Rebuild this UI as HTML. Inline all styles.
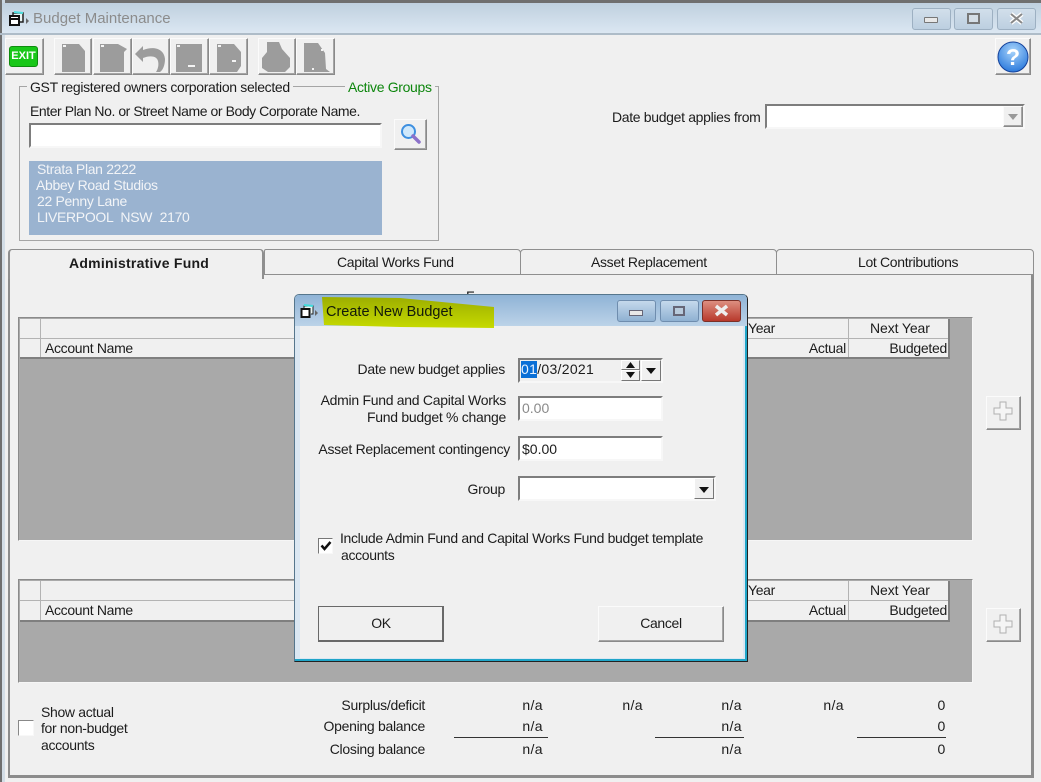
<!DOCTYPE html>
<html><head><meta charset="utf-8"><style>
html,body{margin:0;padding:0;background:#f0f0f0}
#r{position:relative;width:1041px;height:782px;overflow:hidden;background:#f0f0f0;font-family:"Liberation Sans",sans-serif;font-size:14px;color:#1c1c1c}
#r div{position:absolute;box-sizing:border-box}
.t{white-space:nowrap;line-height:16px;letter-spacing:-.33px}
.tr{white-space:nowrap;line-height:16px;text-align:right;letter-spacing:-.29px}
#r .n{letter-spacing:.4px;margin-left:-1px}
.b{background:#f0f0f0;border:1px solid;border-color:#fbfbfb #8a8a8a #8a8a8a #fbfbfb;box-shadow:inset -1px -1px 0 #a5a5a5}
.in{background:#fff;border:2px solid;border-color:#7d7d7d #f7f7f7 #f7f7f7 #7d7d7d}
.l{background:#b3b3b3}
svg{position:absolute;overflow:visible}
</style></head><body><div id="r">
<!-- main window frame -->
<div style="left:0;top:0;width:1041px;height:3px;background:#6f6f6f"></div>
<div style="left:0;top:0;width:5px;height:782px;background:#c9d6e1;border-left:2px solid #6f6f6f"></div>
<div style="left:2px;top:3px;width:1039px;height:30px;background:linear-gradient(#bfd0df,#dbe7f2)"></div>
<div style="left:0;top:33px;width:1041px;height:2px;background:#aebcc8"></div>
<div style="left:2px;top:35px;width:3px;height:747px;background:#d3dde6"></div>
<svg style="left:8px;top:10px" width="20" height="18"><path d="M5 5V3h10v9h-3" fill="#e8f4f4" stroke="#222" stroke-width="1.500"/><rect x="2" y="6" width="9" height="9" fill="#fff" stroke="#111" stroke-width="2"/><path d="M2 9h9" stroke="#111" stroke-width="2"/><path d="M6 2l9 1" stroke="#4de0e0" stroke-width="2"/><path d="M18 8l3 3-3 3z" fill="#666"/></svg>
<div class="t" style="left:33px;top:11px;color:#8c8c8c;font-size:15px;letter-spacing:0">Budget Maintenance</div>
<!-- window controls -->
<div style="left:912px;top:8px;width:39px;height:22px;border:1px solid #9db0c2;border-radius:3px;background:linear-gradient(#d2dfeb,#bccfe0)"></div>
<div style="left:924px;top:17px;width:14px;height:6px;background:#e8e8e8;border:1px solid #777;border-radius:1px"></div>
<div style="left:954px;top:8px;width:39px;height:22px;border:1px solid #9db0c2;border-radius:3px;background:linear-gradient(#d2dfeb,#bccfe0)"></div>
<div style="left:967px;top:13px;width:13px;height:11px;border:2px solid #777;background:#d5dee6"></div>
<div style="left:997px;top:8px;width:39px;height:22px;border:1px solid #9db0c2;border-radius:3px;background:linear-gradient(#d2dfeb,#bccfe0)"></div>
<svg style="left:1009px;top:13px" width="15" height="11"><path d="M2 1l11 9M13 1L2 10" stroke="#fff" stroke-width="4.500"/><path d="M2 1l11 9M13 1L2 10" stroke="#888" stroke-width="2"/></svg>
<!-- toolbar -->
<div class="b" style="left:5px;top:38px;width:39px;height:37px"></div>
<div style="left:9px;top:46px;width:29px;height:21px;border-radius:3px;background:#18c718;border:1px solid #0e8c0e;color:#fff;font-weight:bold;font-size:11px;line-height:19px;text-align:center">EXIT</div>
<div class="b" style="left:54px;top:38px;width:38px;height:37px"></div>
<div class="b" style="left:93px;top:38px;width:39px;height:37px"></div>
<div class="b" style="left:132px;top:38px;width:38px;height:37px"></div>
<div class="b" style="left:170px;top:38px;width:39px;height:37px"></div>
<div class="b" style="left:209px;top:38px;width:39px;height:37px"></div>
<div class="b" style="left:258px;top:38px;width:38px;height:37px"></div>
<div class="b" style="left:296px;top:38px;width:39px;height:37px"></div>
<svg style="left:0;top:0" width="340" height="80" fill="#9c9c9c">
<path d="M62 44h17l6 7v21H62z"/><path d="M100 44h18l9 5-3 3v20h-24z"/>
<path d="M135 54l8-8v4c10-4 21-2 22 9 0 6-2 11-5 13h-4c2-3 3-7 2-11-1-5-8-6-15-3v4z"/><path d="M176 44h26v28h-26z"/><path d="M217 44h17l7 8v14l-4 6h-20z"/>
<path d="M267 42h12l3 7 8 9v9l-5 5h-17l-6-4v-10l5-6z"/><path d="M304 43h14l7 10 1 16 4 3h-26z"/></svg>
<svg style="left:0;top:0" width="340" height="80" fill="#f4f4f4"><rect x="188" y="65" width="7" height="2"/><rect x="232" y="60" width="4" height="2"/><rect x="63" y="45" width="3" height="2"/><rect x="101" y="45" width="3" height="2"/><rect x="177" y="45" width="3" height="2"/><rect x="218" y="45" width="3" height="2"/><rect x="321" y="49" width="2" height="2"/><rect x="312" y="68" width="2" height="2"/></svg>
<div class="b" style="left:995px;top:38px;width:36px;height:37px"></div>
<svg style="left:997px;top:41px" width="32" height="32"><defs><radialGradient id="h" cx=".5" cy=".3" r=".8"><stop offset="0" stop-color="#a8d4fb"/><stop offset="1" stop-color="#1b6ed8"/></radialGradient></defs><circle cx="16" cy="16" r="15" fill="url(#h)" stroke="#14419a"/><text x="16" y="24" text-anchor="middle" font-family="Liberation Sans" font-weight="bold" font-size="23" fill="#fff">?</text></svg>
<!-- group box -->
<div style="left:19px;top:86px;width:420px;height:155px;border:1px solid #a5a5a5"></div>
<div class="t" style="left:27px;top:79px;background:#f0f0f0;padding:0 3px">GST registered owners corporation selected</div>
<div class="t" style="left:345px;top:79px;background:#f0f0f0;padding:0 3px;color:#0d860d">Active Groups</div>
<div class="t" style="left:30px;top:103px;letter-spacing:-.44px">Enter Plan No. or Street Name or Body Corporate Name.</div>
<div class="in" style="left:29px;top:123px;width:353px;height:25px"></div>
<div class="b" style="left:394px;top:119px;width:33px;height:31px"></div>
<svg style="left:400px;top:123px" width="22" height="22"><circle cx="8.5" cy="8.5" r="6.5" fill="#cfe8fb" stroke="#3d8fe0" stroke-width="2"/><path d="M13 13l6 6" stroke="#8b71c9" stroke-width="3.5" stroke-linecap="round"/></svg>
<div style="left:29px;top:161px;width:353px;height:74px;background:#9ab3d0"></div>
<div class="t" style="left:37px;top:161px;color:#f2f4f7">Strata Plan 2222</div>
<div class="t" style="left:36px;top:177px;color:#f2f4f7">Abbey Road Studios</div>
<div class="t" style="left:37px;top:193px;color:#f2f4f7">22 Penny Lane</div>
<div class="t" style="left:37px;top:209px;color:#f2f4f7;word-spacing:4px">LIVERPOOL NSW 2170</div>
<!-- date combo -->
<div class="t" style="left:612px;top:109px">Date budget applies from</div>
<div class="in" style="left:765px;top:104px;width:260px;height:25px"></div>
<div class="b" style="left:1003px;top:106px;width:20px;height:21px"></div>
<svg style="left:1008px;top:114px" width="10" height="6"><path d="M0 0h10L5 6z" fill="#999"/></svg>
<!-- tabs -->
<div style="left:8px;top:274px;width:1026px;height:504px;border:1px solid;border-color:#fff #8c8c8c #8c8c8c #8c8c8c;border-width:1px 3px 3px 2px;background:#f0f0f0"></div>
<div style="left:264px;top:249px;width:257px;height:26px;border:1px solid #8f8f8f;border-radius:2px 4px 0 0;background:#f0f0f0"></div>
<div style="left:520px;top:249px;width:257px;height:26px;border:1px solid #8f8f8f;border-radius:4px 4px 0 0;background:#f0f0f0"></div>
<div style="left:776px;top:249px;width:258px;height:26px;border:1px solid #8f8f8f;border-radius:4px 4px 0 0;background:#f0f0f0"></div>
<div style="left:8px;top:249px;width:256px;height:30px;border:solid #8f8f8f;border-width:1px 2px 0 2px;border-radius:4px 4px 0 0;background:#f0f0f0"></div>
<div class="t" style="left:69px;top:255px;font-weight:bold;letter-spacing:.25px">Administrative Fund</div>
<div class="t" style="left:337px;top:254px">Capital Works Fund</div>
<div class="t" style="left:591px;top:254px">Asset Replacement</div>
<div class="t" style="left:858px;top:254px">Lot Contributions</div>
<!-- grid 1 -->
<div style="left:18px;top:317px;width:955px;height:224px;background:#a9a9a9;border:1px solid;border-color:#8a8a8a #f6f6f6 #f6f6f6 #8a8a8a"></div>
<div style="left:20px;top:319px;width:930px;height:40px;background:#f0f0f0;border-right:2px solid #7f7f7f;border-bottom:2px solid #7f7f7f"></div>
<div class="l" style="left:20px;top:338px;width:928px;height:1px"></div>
<div class="l" style="left:40px;top:319px;width:1px;height:38px"></div>
<div class="l" style="left:848px;top:319px;width:1px;height:38px"></div>
<div class="t" style="left:45px;top:340px">Account Name</div>
<div class="t" style="left:748px;top:320px">Year</div>
<div class="tr" style="left:780px;top:340px;width:66px">Actual</div>
<div class="t" style="left:870px;top:320px;letter-spacing:-.1px">Next Year</div>
<div class="tr" style="left:860px;top:340px;width:87px">Budgeted</div>
<!-- grid 2 -->
<div style="left:18px;top:579px;width:955px;height:104px;background:#a9a9a9;border:1px solid;border-color:#8a8a8a #f6f6f6 #f6f6f6 #8a8a8a"></div>
<div style="left:20px;top:581px;width:930px;height:41px;background:#f0f0f0;border-right:2px solid #7f7f7f;border-bottom:2px solid #7f7f7f"></div>
<div class="l" style="left:20px;top:600px;width:928px;height:1px"></div>
<div class="l" style="left:40px;top:581px;width:1px;height:39px"></div>
<div class="l" style="left:848px;top:581px;width:1px;height:39px"></div>
<div class="t" style="left:45px;top:602px">Account Name</div>
<div class="t" style="left:748px;top:582px">Year</div>
<div class="tr" style="left:780px;top:602px;width:66px">Actual</div>
<div class="t" style="left:870px;top:582px;letter-spacing:-.1px">Next Year</div>
<div class="tr" style="left:860px;top:602px;width:87px">Budgeted</div>
<!-- plus buttons -->
<div class="b" style="left:986px;top:396px;width:35px;height:34px"></div>
<div class="b" style="left:986px;top:608px;width:35px;height:34px"></div>
<svg style="left:993px;top:401px" width="20" height="20"><path d="M7 1h6v6h6v6h-6v6H7v-6H1V7h6z" fill="#f5f5f5" stroke="#b0b0b0"/></svg>
<svg style="left:993px;top:614px" width="20" height="20"><path d="M7 1h6v6h6v6h-6v6H7v-6H1V7h6z" fill="#f5f5f5" stroke="#b0b0b0"/></svg>
<!-- bottom -->
<div style="left:18px;top:720px;width:16px;height:16px;background:#fff;border:1px solid;border-color:#888 #f8f8f8 #f8f8f8 #888"></div>
<div class="t" style="left:41px;top:704px">Show actual</div>
<div class="t" style="left:41px;top:720px">for non-budget</div>
<div class="t" style="left:41px;top:737px">accounts</div>
<div class="tr" style="left:300px;top:697px;width:125px">Surplus/deficit</div>
<div class="tr" style="left:300px;top:718px;width:125px">Opening balance</div>
<div class="tr" style="left:300px;top:741px;width:125px">Closing balance</div>
<div class="tr n" style="left:500px;top:697px;width:44px">n/a</div><div class="tr n" style="left:500px;top:718px;width:44px">n/a</div><div class="tr n" style="left:500px;top:741px;width:44px">n/a</div>
<div class="tr n" style="left:600px;top:697px;width:44px">n/a</div>
<div class="tr n" style="left:699px;top:697px;width:44px">n/a</div><div class="tr n" style="left:699px;top:718px;width:44px">n/a</div><div class="tr n" style="left:699px;top:741px;width:44px">n/a</div>
<div class="tr n" style="left:801px;top:697px;width:44px">n/a</div>
<div class="tr" style="left:900px;top:697px;width:45px">0</div><div class="tr" style="left:900px;top:718px;width:45px">0</div><div class="tr" style="left:900px;top:741px;width:45px">0</div>
<div style="left:454px;top:737px;width:94px;height:1px;background:#333"></div>
<div style="left:655px;top:737px;width:89px;height:1px;background:#333"></div>
<div style="left:857px;top:737px;width:89px;height:1px;background:#333"></div>
<div class="t" style="left:466px;top:288px">F</div>
<!-- dialog -->
<div style="left:294px;top:294px;width:454px;height:368px;border:1px solid #222;border-left-color:#56768c;border-top-color:#56768c;border-radius:5px 5px 0 0;background:#dbe7f2"></div>
<div style="left:745px;top:300px;width:2px;height:361px;background:#1fa5c8"></div>
<div style="left:295px;top:659px;width:452px;height:2px;background:#1fa5c8"></div>
<div style="left:295px;top:295px;width:452px;height:31px;background:linear-gradient(#8fb3d6,#bcd3e8);border-radius:4px 4px 0 0"></div>
<div style="left:300px;top:326px;width:443px;height:332px;background:#f0f0f0"></div>
<svg style="left:300px;top:296px" width="210" height="34"><defs><linearGradient id="y" x1="0" y1="0" x2="0" y2="1"><stop offset="0" stop-color="#9cae00"/><stop offset="1" stop-color="#c6da00"/></linearGradient></defs><path d="M22 1L100 2 194 11V32L100 31 24 29z" fill="url(#y)"/></svg>
<svg style="left:300px;top:304px" width="20" height="16"><path d="M4 4V2h9v8h-2" fill="#e8f4f4" stroke="#222"/><rect x="1.500" y="5" width="8" height="8" fill="#fff" stroke="#111" stroke-width="2"/><path d="M4 1l9 1" stroke="#3fdcdc" stroke-width="2"/><path d="M15 6l3 3-3 3z" fill="#666"/></svg>
<div class="t" style="left:326px;top:304px;letter-spacing:0;font-size:14.5px;color:#12190a">Create New Budget</div>
<div style="left:617px;top:300px;width:39px;height:22px;border:1px solid #6f8dae;border-radius:3px;background:linear-gradient(#c5d9ec,#8fb1d2)"></div>
<div style="left:629px;top:310px;width:14px;height:6px;background:#e8e8e8;border:1px solid #667"></div>
<div style="left:660px;top:300px;width:39px;height:22px;border:1px solid #6f8dae;border-radius:3px;background:linear-gradient(#c5d9ec,#8fb1d2)"></div>
<div style="left:673px;top:306px;width:12px;height:10px;border:2px solid #667;background:#b9cbdc"></div>
<div style="left:702px;top:300px;width:39px;height:22px;border:1px solid #7b3028;border-radius:3px;background:linear-gradient(#dd8f80,#b8392c)"></div>
<svg style="left:714px;top:305px" width="15" height="11"><path d="M2 1l11 9M13 1L2 10" stroke="#eee" stroke-width="3.500"/></svg>
<div class="tr" style="left:320px;top:361px;width:185px">Date new budget applies</div>
<div class="tr" style="left:300px;top:392px;width:206px">Admin Fund and Capital Works</div>
<div class="tr" style="left:300px;top:409px;width:206px">Fund budget % change</div>
<div class="tr" style="left:300px;top:441px;width:210px">Asset Replacement contingency</div>
<div class="tr" style="left:400px;top:481px;width:105px">Group</div>
<!-- date -->
<div style="left:518px;top:358px;width:145px;height:25px;background:#f0f0f0;border:2px solid;border-color:#7d7d7d #f7f7f7 #f7f7f7 #7d7d7d"></div>
<div style="left:521px;top:361px;width:16px;height:17px;background:#0a6fd6"></div>
<div class="t" style="left:521px;top:361px;letter-spacing:.3px"><span style="color:#e8f2ff">01</span>/03/2021</div>
<div style="left:621px;top:360px;width:19px;height:10px;background:#f0f0f0;border:1px solid;border-color:#fff #777 #777 #fff"></div>
<div style="left:621px;top:370px;width:19px;height:11px;background:#f0f0f0;border:1px solid;border-color:#fff #777 #777 #fff"></div>
<svg style="left:625px;top:362px" width="11" height="17"><path d="M1 6h9L5.500 0zM1 10h9L5.500 16z" fill="#111"/></svg>
<div style="left:641px;top:360px;width:20px;height:21px;background:#f0f0f0;border:1px solid;border-color:#fff #777 #777 #fff"></div>
<svg style="left:646px;top:368px" width="10" height="6"><path d="M0 0h10L5 6z" fill="#111"/></svg>
<div class="in" style="left:518px;top:396px;width:145px;height:25px"></div>
<div class="t" style="left:522px;top:400px;color:#8a8a8a;letter-spacing:0">0.00</div>
<div class="in" style="left:518px;top:436px;width:145px;height:25px"></div>
<div class="t" style="left:522px;top:441px;letter-spacing:0">$0.00</div>
<div class="in" style="left:518px;top:476px;width:198px;height:25px"></div>
<div style="left:694px;top:478px;width:20px;height:21px;background:#f0f0f0;border:1px solid;border-color:#fff #777 #777 #fff"></div>
<svg style="left:699px;top:487px" width="10" height="6"><path d="M0 0h10L5 6z" fill="#111"/></svg>
<!-- checkbox -->
<div style="left:318px;top:538px;width:15px;height:16px;background:#fff;border:1px solid;border-color:#777 #f8f8f8 #f8f8f8 #777"></div>
<svg style="left:320px;top:541px" width="12" height="11"><path d="M1.500 4.500l3 3.500 6-7" fill="none" stroke="#111" stroke-width="2.500"/></svg>
<div class="t" style="left:340px;top:530px">Include Admin Fund and Capital Works Fund budget template</div>
<div class="t" style="left:341px;top:547px">accounts</div>
<!-- dialog buttons -->
<div style="left:318px;top:606px;width:126px;height:36px;background:#f0f0f0;border:1px solid #696969;border-right-width:2px;border-bottom-width:2px"></div>
<div class="t" style="left:318px;top:615px;width:126px;text-align:center">OK</div>
<div class="b" style="left:598px;top:606px;width:126px;height:36px"></div>
<div class="t" style="left:598px;top:615px;width:126px;text-align:center">Cancel</div>
</div></body></html>
